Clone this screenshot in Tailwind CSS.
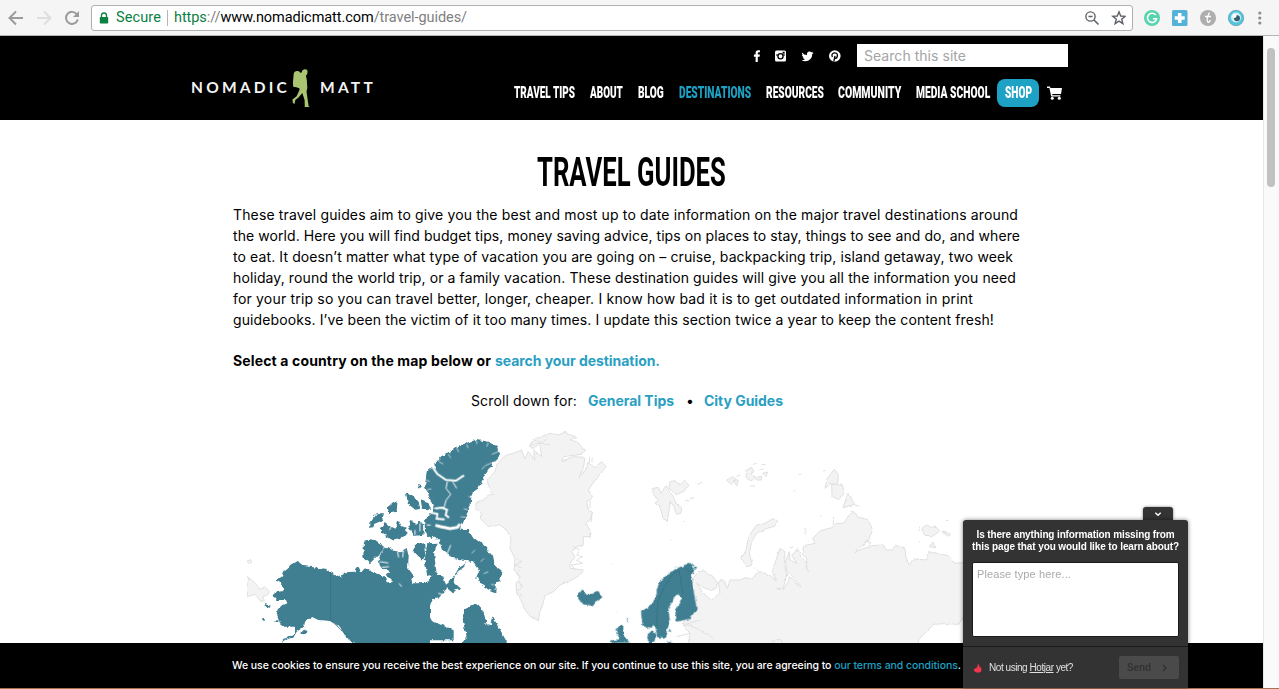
<!DOCTYPE html>
<html lang="en">
<head>
<meta charset="utf-8">
<title>Travel Guides</title>
<script src="https://cdn.jsdelivr.net/npm/@tailwindcss/browser@4"></script>
</head>
<body class="w-[1279px] h-[689px] overflow-hidden bg-white font-['Inter',sans-serif] text-black">
<div class="relative flex flex-col w-[1279px] h-[689px]">

  <!-- Browser toolbar -->
  <div class="flex items-center h-9 shrink-0 bg-[#f5f5f5] border-b border-[#b4b4b4] pl-2 font-['Roboto',sans-serif] text-[14.5px]">
    <svg class="w-[72px] h-5 mr-[11px]" viewBox="8 7 72 20" fill="none" stroke-width="2">
      <path stroke="#9b9b9b" d="M23 17H10M16 10.5 9.5 17l6.5 6.500"/>
      <path stroke="#dedede" d="M37 17h13M44 10.500l6.500 6.500-6.500 6.500"/>
      <path stroke="#9b9b9b" d="M77 13.500a6 6 0 1 0 .8 5"/>
      <path fill="#9b9b9b" d="M79 10v6h-6z"/>
    </svg>
    <div class="flex items-center w-[1042px] h-[26px] bg-white border border-[#b0b0b0] rounded-[3px] pl-[7px] pr-[6px] leading-[24px]">
      <svg class="w-[10px] h-3 mr-[7px]" viewBox="0 0 10 12"><path d="M2.500 6V3.500a2.500 2.500 0 0 1 5 0V6" fill="none" stroke="#0b8043" stroke-width="1.300"/><rect x=".8" y="5" width="8.400" height="6.500" rx=".8" fill="#0b8043"/></svg>
      <span data-w="45" class="text-[#0b8043] whitespace-nowrap w-[44px]">Secure</span>
      <span class="w-px h-4 bg-[#b5b5b5] ml-[7px] mr-[6px]"></span>
      <span data-w="293" class="whitespace-nowrap text-[#808080]"><span class="text-[#0b8043]">https</span>://<span class="text-black">www.nomadicmatt.com</span>/travel-guides/</span>
      <svg class="w-[42px] h-5 ml-auto" viewBox="1084 7 42 20" fill="none" stroke="#5f6368" stroke-width="1.400">
        <circle cx="1090.500" cy="15.500" r="4.600"/><path d="m1094 19 4.500 4.500M1088.500 15.500h4" stroke-width="1.600"/>
        <path d="m1119 10.800 1.700 4.200 4.500.3-3.500 2.900 1.200 4.500-3.900-2.500-3.900 2.500 1.200-4.500-3.500-2.900 4.500-.3z"/>
      </svg>
    </div>
    <svg class="w-[126px] h-5 ml-[10px]" viewBox="1143 7 126 20">
      <circle cx="1152" cy="17" r="8" fill="#57d4ae"/><path d="M1155.700 14a4.600 4.600 0 1 0 .9 3.800h-3.600" fill="none" stroke="#fff" stroke-width="1.600"/>
      <rect x="1172" y="9" width="15.500" height="16" rx="1.500" fill="#54b1d8"/><path d="M1179.700 12v10M1174.700 17h10" stroke="#fff" stroke-width="3.600"/>
      <circle cx="1208" cy="17" r="8" fill="#aeaeae"/><path d="M1209.500 11.500q-3.500 7-2 9t3-1.500M1205 15.500h6" fill="none" stroke="#fff" stroke-width="1.300"/>
      <circle cx="1236" cy="17" r="7.700" fill="#52c6df" stroke="#6298a8" stroke-width=".7"/><circle cx="1236" cy="16.500" r="5" fill="#d6f1f5"/><circle cx="1237" cy="17.200" r="3" fill="#355e6b"/><circle cx="1234.500" cy="15" r="2" fill="#fff"/>
      <g fill="#8c8c8c"><circle cx="1259.800" cy="12" r="1.600"/><circle cx="1259.800" cy="17" r="1.600"/><circle cx="1259.800" cy="22" r="1.600"/></g>
    </svg>
  </div>

  <div class="flex h-[652px]">
    <div class="flex flex-col w-[1263px]">
      <!-- Site header -->
      <header class="flex justify-between h-[84px] shrink-0 bg-black pl-[191px] pr-[195px]">
        <div class="flex items-center h-[38px] mt-[33px] font-['Lato',sans-serif] font-bold text-[15.500px] text-[#f4f4f4]">
          <span data-w="99" class="w-[100px] -mt-px whitespace-nowrap">NOMADIC</span>
          <svg class="w-5 h-[38px] ml-px" viewBox="292 69 20 38" fill="#a9c571">
            <path d="M302 71q1-2 3.200-1.800 2.400.1 2.400 2.200l-.5 3q-.8.600-1.200 1l.9 4.600.5 8-.8 3.500 1.800 12.500.2 2 1.300 1v1h-5l-.2-8-2.300-7-3.800 4.600-3.200 2.300-.8 4-1.600-1-.5-3.500 4.200-3.200 3-6.500-.3-1.500-3-1-3.100-.5-.3-4 .8-9q.6-2.700 3.300-2.700 2.600-.3 3.200 1.700l1.500-.2z"/>
          </svg>
          <span data-w="56" class="w-[52px] ml-[8px] -mt-px whitespace-nowrap">MATT</span>
        </div>
        <div class="flex flex-col items-end">
          <div class="flex items-center mt-2 h-[23px]">
            <svg class="w-[90px] h-4 mr-[14px]" viewBox="753 48 90 16" fill="#fff">
              <path d="M755.600 62v-5.300h-1.700v-2.100h1.700v-1.600q0-2.800 2.700-2.800h1.600v2.100h-1.100q-1 0-1 1v1.300h2.100l-.3 2.100h-1.800V62z"/>
              <rect x="775" y="50.500" width="11" height="11" rx="1.500"/><g fill="none" stroke="#000"><path d="M776 55h2.500M782.500 55h2.500" stroke-width="1"/><circle cx="780.500" cy="56.300" r="2.600" stroke-width="1.300"/></g><rect x="782.600" y="51.700" width="2" height="2" fill="#000"/>
              <path d="M802 52.500q2 2.500 5 2.600-.4-3.300 2.400-3.600 1.200 0 2 .8l1.700-.6-1 1.400 1.500-.3-1.400 1.500q0 4.200-3.700 6.300-3.700 1.500-7-.4 2.200 0 3.500-1-1.900-.4-2.300-1.900h1.100q-1.800-.8-2-2.500l1.100.2q-1.500-1.300-.9-2.500z"/>
              <circle cx="834.800" cy="56" r="5.800"/><path d="M833.800 61.500l1.200-5.700M832.400 57q-1.400-3 1.400-4 3.500-.5 3.600 2.200 0 2.800-2 3.200-1 0-1.200-.8" fill="none" stroke="#000" stroke-width="1.300"/>
            </svg>
            <div class="flex items-center w-[211px] h-[23px] bg-white pl-[7px] text-[14px] text-[#a4a4a4]"><span data-w="102" class="whitespace-nowrap">Search this site</span></div>
          </div>
          <nav class="flex items-center gap-[15px] mt-[12px] h-7 mr-[6px] font-['Roboto',sans-serif] font-black text-[16.500px] text-white leading-7 whitespace-nowrap">
            <span class="w-[61px]"><span data-x="61" class="inline-block origin-left">TRAVEL TIPS</span></span>
            <span class="w-[33px]"><span data-x="33" class="inline-block origin-left">ABOUT</span></span>
            <span class="w-[26px]"><span data-x="26" class="inline-block origin-left">BLOG</span></span>
            <span class="w-[72px] text-[#1da1c4]"><span data-x="72" class="inline-block origin-left">DESTINATIONS</span></span>
            <span class="w-[57px]"><span data-x="58" class="inline-block origin-left">RESOURCES</span></span>
            <span class="w-[63px]"><span data-x="63" class="inline-block origin-left">COMMUNITY</span></span>
            <span class="w-[74px]"><span data-x="74" class="inline-block origin-left">MEDIA SCHOOL</span></span>
            <span class="w-[42px] h-7 -ml-2 pl-2 rounded-lg bg-[#1da1c4]"><span data-x="27" class="inline-block origin-left">SHOP</span></span>
            <svg class="w-[15px] h-[14px] -ml-[7px]" viewBox="0 0 15 14" fill="#fff"><path d="M0 .5h3l.4 1.500H15l-1 6H5.200l.2 1.200h8v1.300H4.200L2.400 2H0z"/><circle cx="5.300" cy="12.200" r="1.500"/><circle cx="12.300" cy="12.200" r="1.500"/></svg>
          </nav>
        </div>
      </header>

      <!-- Article -->
      <main class="flex flex-col w-[797px] ml-[233px] text-[14px] leading-[21px]">
        <h1 class="self-center mt-[32px] h-10 w-[190px] leading-10 whitespace-nowrap font-['Roboto',sans-serif] font-bold text-[41px]"><span data-x="189" class="inline-block origin-left">TRAVEL GUIDES</span></h1>
        <div class="flex flex-col items-start mt-[12px] whitespace-nowrap">
          <span data-w="785">These travel guides aim to give you the best and most up to date information on the major travel destinations around</span>
          <span data-w="787">the world. Here you will find budget tips, money saving advice, tips on places to stay, things to see and do, and where</span>
          <span data-w="780">to eat. It doesn’t matter what type of vacation you are going on – cruise, backpacking trip, island getaway, two week</span>
          <span data-w="783">holiday, round the world trip, or a family vacation. These destination guides will give you all the information you need</span>
          <span data-w="740">for your trip so you can travel better, longer, cheaper. I know how bad it is to get outdated information in print</span>
          <span data-w="761">guidebooks. I’ve been the victim of it too many times. I update this section twice a year to keep the content fresh!</span>
        </div>
        <p class="flex gap-1 mt-5 font-bold whitespace-nowrap"><span data-w="258">Select a country on the map below or</span><a data-w="165" class="text-[#2a9fc2]">search your destination.</a></p>
        <p class="flex mt-[19px] ml-[238px] whitespace-nowrap"><span data-w="106">Scroll down for:</span><a data-w="86" class="ml-[11px] font-bold text-[#2a9fc2]">General Tips</a><span class="w-[6px] mx-3 text-center">•</span><a data-w="79" class="font-bold text-[#2a9fc2]">City Guides</a></p>

        <!-- World map, cropped by the cookie bar -->
        <svg class="w-[716px] h-[218px] ml-[14px] mt-[14px] shrink-0" viewBox="247 425 716 218">
          <defs>
            <filter id="coast" x="-5%" y="-5%" width="110%" height="110%"><feTurbulence type="fractalNoise" baseFrequency=".22" numOctaves="2" seed="4" result="n"/><feDisplacementMap in="SourceGraphic" in2="n" scale="4.500" xChannelSelector="R" yChannelSelector="G"/></filter>
            <filter id="shore" x="-5%" y="-5%" width="110%" height="110%"><feTurbulence type="fractalNoise" baseFrequency=".18" numOctaves="2" seed="9" result="n"/><feDisplacementMap in="SourceGraphic" in2="n" scale="2.500" xChannelSelector="R" yChannelSelector="G"/></filter>
          </defs>
          <g fill="#f3f3f3" stroke="#dfdfdf" stroke-width="3" stroke-linejoin="round" filter="url(#shore)">
            <g transform="translate(230 425) scale(.33333)">
              <path d="M52 455 65 465 85 485 90 495 103 485 118 500 112 510 98 515 103 527 92 528 75 508 52 515zM52 408l10-4 5 10-12 4z"/>
            </g>
            <g transform="translate(410 425) scale(.33333)">
              <path d="M355 62 375 42 420 25 445 30 465 22 500 38 480 45 500 50 523 75 515 88 460 95 455 108 490 95 525 97 520 130 508 160 530 130 533 112 555 128 575 110 588 125 560 160 545 180 535 195 548 215 530 230 535 255 548 262 540 285 525 295 545 320 540 335 520 335 520 360 500 365 485 380 495 395 480 415 480 430 520 435 510 450 485 465 450 480 430 500 405 512 398 540 390 560 385 588 365 575 350 562 335 530 320 505 318 475 330 455 312 435 315 400 300 370 303 340 290 315 265 297 235 305 210 280 215 265 197 250 198 235 220 225 235 210 250 208 235 180 232 165 255 140 260 120 285 92 310 85 335 75 345 102 355 80 375 105 370 75 395 95 390 62 370 70z"/>
              <path d="M538 95v20M546 97v15M540 225v25M545 265v25M540 325v15" fill="none"/>
              <path d="M490 365l20 10-10 15 18 5-20 10 20 10-35 5 15 15M320 400l15 10-20 10 20 10-15 15 12 15M325 465l10 20-10 15 12 15M360 60l30-5 20-12M375 45l25 12 20 2M455 108l15-2" fill="none"/>
            </g>
            <g transform="translate(560 425) scale(.33333)">
              <path d="M280 190 295 187 303 205 318 182 330 200 340 215 348 235 366 250 362 265 348 268 342 245 332 230 328 250 322 290 308 275 300 245 285 235 295 225 278 205zM330 170l15-3 10 10 20-8 12 12-15 18-25 10-20-20zM412 178l14-6M378 225l10 3M370 290l5-2M390 221l12-3M332 345h3M155 418l6-3M167 560l3 2"/>
              <path d="M500 165l20-10 8 8-15 15zM520 165h15l-5 18zM530 155l10-5M560 135l15-8 5 15-10 5 18 10-15 10-15-8zM590 155h14v10h-14zM608 145l15-5-5 15zM580 118l10-3M605 118l12 2M570 182l12 2M598 135l10-4"/>
              <path d="M642 280 653 288 645 303 615 312 590 325 575 350 568 385 577 420 560 425 545 400 558 375 565 335 590 300 610 297zM585 428l12 12"/>
            </g>
            <g transform="translate(740 425) scale(.33333)">
              <path d="M-140 460 -125 440 -105 438 -80 455 -68 475 -72 490 -90 498 -130 475 -105 510 -85 525 -60 505 -65 470 -50 465 -38 490 -30 465 0 465 15 458 35 462 52 445 60 440 90 450 108 468 97 440 108 405 120 370 135 380 133 420 140 450 130 490 110 490 128 498 145 470 148 455 162 465 170 480 182 487 165 460 140 440 137 410 148 380 150 405 170 415 155 390 175 375 185 400 195 410 205 440 198 425 200 400 188 390 190 362 225 355 218 340 240 318 275 308 290 295 310 295 338 258 352 275 385 285 398 315 385 345 345 380 395 362 430 360 438 375 458 375 465 360 495 372 498 400 508 420 520 402 560 405 565 380 590 385 625 392 645 415 670 413 720 440 720 560 670 575 655 600 628 595 580 598 535 645 540 680 -180 680 -185 655 -155 655 -150 625 -170 600 -155 555z"/>
              <path d="M262 160 283 133 295 150 293 175 270 178 255 190zM275 178l33 3 3 25-15 18-20-10zM309 248l15-43 20 33zM345 240l12 4M250 137h6M176 149l8-2M160 197l6 3M240 275l4-4M280 275v25M195 308v20M200 350h5M150 370l10-5M165 378l10-8"/>
              <path d="M545 310l15-10 15 8 10-5 14 15-20 15-25-2zM605 320l30 8-10 6zM568 365l10-12 10 15zM538 305v15M537 350h3M618 286h8"/>
              <path d="M370 365l10-20 12 8-10 10M95 650l25-8 8 12M-170 600l50-15M-155 555l-15 40 40 15 50 30M-190 635l40-10" fill="none"/>
            </g>
          </g>
          <g fill="#3f7f92" filter="url(#coast)">
            <g transform="translate(230 425) scale(.33333)">
              <path d="M135 467 155 455 165 435 180 422 203 408 220 422 240 425 288 432 301 441 332 457 345 442 375 440 386 425 393 442 405 430 425 440 465 455 470 472 510 470 540 475 600 475 600 700 372 654 350 640 330 605 300 588 265 585 245 575 225 590 222 605 200 620 190 638 165 645 152 654 160 645 195 625 195 605 165 605 150 595 140 565 148 545 172 535 168 525 140 525 128 510 140 500 163 498 160 485 150 470z"/>
              <path d="M103 537l22 6-2 6-18-4zM97 579h7v6h-7zM135 583h10v8h-8zM215 620l15-5-3 12-12 2zM236 575l12-4-8 15z"/>
            </g>
            <!-- Hudson Bay and the Arctic archipelago -->
            <g transform="translate(360 430) scale(.33333)">
              <path d="M0 425l30 3 45 17 3 14 60 5 62-6 22-30 28 10 8 30 12-20 25-20-5-10 20-12 10-15-45-8-30-25-6-25 8-20 10-13h70l10 20 40 30 18 25 5 25 28 22-8 32-12 3-2 30-20-8-22-15-15-22 8-20-18-25-20-5-8 20-25 18-5 25 20 20-25 12-15-12-25 30-22 5-8 45 10 18 65 28v30H0z"/>
              <path d="M315 540l10-12 25-5 20 20 10 40 10 2 8-25 20 35 22 40v10H302l18-25-12-50z"/>
              <path d="M12 332 40 326 77 352 52 378 30 400 10 382zM55 378l25-28 20 12 24 2 16-10 6 25-2 35 18 25-8 8 4 15-24 8-34-13-20-20 10-10-30-15zM28 278l22-28 22 0-6 22-24 10-2 10-12 2zM62 298l12-22 15 12 18 8 8-26 10 18 14 6v22l-18 8-25 5-32-20zM82 232l22-20 8 8-2 25-22 5zM138 190l16 3 22 22 4 22-14 2-22-18zM182 208l22 8 8 20-8 8-18-8zM174 162l8 2-2 14zM136 242l8 22 3 8zM145 288l10-16 14 14 12-16 8 18 2 26-30 4-10-14zM192 265l22 2 2 18 14 12-2 20-16 8-16-12zM162 345l30-8 4 40-10 15-14-14-12-12zM202 340l32-2-12 32 8 60-28 10-8-50z"/>
              <path d="M226 102 245 80 270 65 300 45 325 38 345 30 380 34 410 48 420 75 400 100 375 135 355 175 335 190 332 225 315 265 304 290 304 322 290 328 225 328 218 290 200 265 215 250 220 230 205 195 195 170 200 125 215 112 228 118z"/>
            </g>
            <g transform="translate(560 425) scale(.33333)">
              <path d="M55 510 65 495 75 510 90 505 115 498 127 518 95 542 70 538 55 522zM243 560 275 540 290 510 290 490 300 470 325 445 350 430 390 413 408 430 395 455 400 490 410 550 390 582 350 590 345 555 365 520 350 508 325 550 330 590 315 635 295 642 283 600 265 612 247 600z"/>
              <path d="M263 625l15-8 12 12-8 24h-18zM170 608l20-8 0 25 18 28h-60l10-8 20-2-5-15zM200 580h6l-2 12zM318 650l15-2v8zM325 622l6-10 2 10z"/>
            </g>
          </g>
          <g transform="translate(360 430) scale(.33333)" fill="none" stroke="#fff" stroke-width="3" filter="url(#shore)">
            <path d="M218 112 232 132 258 150 288 152 312 136" stroke-width="6"/>
            <path d="M262 155l-4 20 14 18-14 18-6 22-32 2M278 155l12 20"/>
            <path d="M226 235l20-2 15 6-4 16 10 8M214 248l18 4-2 14 24 2" stroke-width="6"/>
            <path d="M226 286l16 4 28 6 22-4 8-10" stroke-width="9"/>
            <path d="M272 345l-10 25 2 35 10 10M112 362l4 20M130 362l-2 20M60 395l25 4M65 412l22-2M88 300l8-14M125 470l-8-10M235 490l15 4M165 300v14M180 280v24M200 285h12"/>
            <path d="M300 425l25 10 10 25M290 455l20 8" stroke-width="5"/>
            <path d="M290 54l6 12M265 72l7 12M238 96l12 6M320 42l4 12M350 32v10M385 38l-5 12M415 65l-20 8M412 92l-35 14-12 12M197 150l12 4M200 180l14-4M338 200l-12 0M325 240l-14-4M318 262l-16-2M345 360l-10 10M372 385l-10 10M385 425l-14 6M405 465l-12-2" stroke-width="2"/>
          </g>
          <g fill="none" stroke="#36707f" stroke-width=".8">
            <path d="M330.500 572v48l13 12 10 11M658 601l-1 14 0 12M658 601l7-15 8-12 6-4M679 570l4 24M685 568l5 4 4-1"/>
          </g>
        </svg>
      </main>
    </div>

    <!-- Page scrollbar -->
    <div class="w-4 h-[652px] bg-[#fafafa] border-l border-[#e7e7e7] pl-[3px] pt-3"><div class="w-2 h-[139px] rounded-full bg-[#c1c1c1]"></div></div>
  </div>
  <div class="h-px bg-[#a9714e]"></div>

  <!-- Cookie notice -->
  <div class="absolute left-0 top-[643px] w-[1263px] h-[45px] bg-black text-white text-[10.500px] font-medium leading-[45px] pl-[232px] whitespace-nowrap"><span data-w="729" class="inline-block">We use cookies to ensure you receive the best experience on our site. If you continue to use this site, you are agreeing to <a class="text-[#1da1c4]">our terms and conditions</a>.</span></div>

  <!-- Survey widget -->
  <div class="absolute left-[963px] top-[507px] w-[225px] h-[181px] flex flex-col font-['Liberation_Sans',sans-serif] text-[10px]">
    <div class="self-end mr-[15px] w-[30px] h-[13px] rounded-t-[3px] bg-[#333] shadow-[0_0_3px_rgba(0,0,0,.5)] flex justify-center items-center"><svg class="w-2 h-2" viewBox="0 0 8 8"><path d="m1.300 2.700 2.700 2.500 2.700-2.500" fill="none" stroke="#fff" stroke-width="1.400"/></svg></div>
    <div class="relative flex flex-col h-[168px] rounded-t-[3px] bg-[#333] shadow-[0_0_4px_rgba(0,0,0,.5)]">
      <div class="flex flex-col items-center mt-[9px] font-bold text-white leading-3 whitespace-nowrap"><span data-w="198">Is there anything information missing from</span><span data-w="207">this page that you would like to learn about?</span></div>
      <div class="ml-[9px] mt-[9px] w-[207px] h-[75px] bg-white border border-[#1a1a1a] rounded-[2px] pl-1 pt-[3px] text-[11px] leading-4 text-[#aaa]"><span data-w="94" class="whitespace-nowrap">Please type here...</span></div>
      <div class="flex items-center h-[42px] mt-[9px] border-t border-[#1a1a1a] pl-[10px] pr-[9px] text-[#e0e0e0]">
        <svg class="w-[10px] h-[10px] mr-[6px]" viewBox="0 0 10 10"><path d="M4.500.5Q7 2 6.500 4.500L7.500 4Q10 8 6.500 9.500H3Q-.5 7.500 2 5l.8.7Q5.500 3 4.500.5z" fill="#f4364c"/></svg>
        <span data-w="84" class="whitespace-nowrap">Not using <u>Hotjar</u> yet?</span>
        <div class="ml-auto flex items-center justify-between w-[60px] h-[23px] rounded-[2px] bg-[#4a4a4a] pl-2 pr-3 font-bold text-[#333]"><span data-w="24">Send</span><svg class="w-[5px] h-2" viewBox="0 0 5 8"><path d="m1 1 3 3-3 3" fill="none" stroke="#333" stroke-width="1.500"/></svg></div>
      </div>
    </div>
  </div>
</div>
<script>
  // Tracks or condenses each text run so that it fills its column.
  function fitText() {
    document.querySelectorAll('[data-w]').forEach(function (el) {
      el.style.letterSpacing = '0px';
      var r = document.createRange(); r.selectNodeContents(el);
      var gap = (el.dataset.w - r.getBoundingClientRect().width) / el.textContent.length;
      el.style.letterSpacing = gap.toFixed(3) + 'px';
    });
    document.querySelectorAll('[data-x]').forEach(function (el) {
      el.style.transform = 'scaleX(' + (el.dataset.x / el.offsetWidth).toFixed(4) + ')';
    });
  }
  window.addEventListener('load', fitText);
  document.fonts.ready.then(fitText);
</script>
</body>
</html>
